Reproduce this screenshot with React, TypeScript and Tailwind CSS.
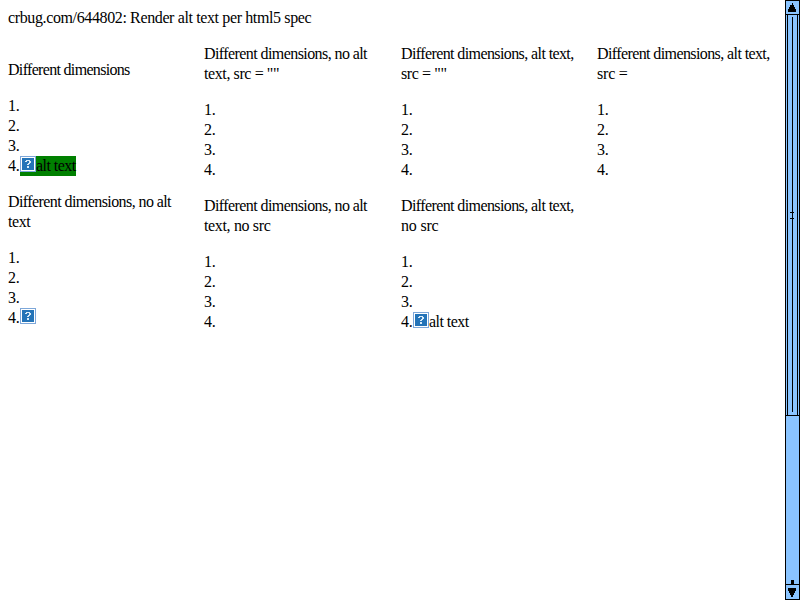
type Line = { text: string; tracking: string };
type Group = { lines: Line[]; offset?: string; icon?: boolean; alt?: boolean; highlight?: boolean };

const noAlt: Line = { text: 'Different dimensions, no alt', tracking: 'tracking-[-0.58px]' };
const withAlt: Line = { text: 'Different dimensions, alt text,', tracking: 'tracking-[-0.6px]' };
const short = 'tracking-[-0.4px]';

const groups: Group[] = [
  { lines: [{ text: 'Different dimensions', tracking: 'tracking-[-0.68px]' }], offset: 'pt-4', icon: true, alt: true, highlight: true },
  { lines: [noAlt, { text: 'text, src = ""', tracking: short }] },
  { lines: [withAlt, { text: 'src = ""', tracking: short }] },
  { lines: [withAlt, { text: 'src =', tracking: 'tracking-[-0.2px]' }] },
  { lines: [noAlt, { text: 'text', tracking: short }], offset: '-mt-1', icon: true },
  { lines: [noAlt, { text: 'text, no src', tracking: 'tracking-[-0.35px]' }] },
  { lines: [withAlt, { text: 'no src', tracking: 'tracking-[-0.2px]' }], icon: true, alt: true },
];

function BrokenImage() {
  return (
    <svg width="16" height="16" viewBox="0 0 16 16" className="-mt-1 shrink-0" shapeRendering="crispEdges">
      <rect width="16" height="16" fill="#7da7d9" />
      <rect x="1" y="1" width="14" height="14" fill="#fff" />
      <rect x="2" y="2" width="12" height="12" fill="#2474b8" />
      <path d="M6 4h4v1H6zM5 5h2v1H5zM9 5h2v2H9zM8 7h2v1H8zM7 8h2v1H7zM7 10h2v2H7z" fill="#d8eaf7" />
    </svg>
  );
}

function Scrollbar() {
  return (
    <aside className="flex h-[600px] w-[15px] flex-col border-x border-black bg-[#8ac4ff]">
      <div className="h-[15px] border-y border-black">
        <svg width="13" height="13" viewBox="0 0 13 13" shapeRendering="crispEdges">
          <path d="M6 2h1v2h1v2h1v2h1v3H2V8h1V6h1V4h2z" />
        </svg>
      </div>
      <div className="h-[401px] border-b border-black">
        <svg width="13" height="400" viewBox="0 0 13 400" shapeRendering="crispEdges">
          <path d="M1 0h1v400H1zM11 0h1v400h-1zM6 2h1v395H6zM4 197h4v1H4zM4 203h4v1H4z" />
        </svg>
      </div>
      <div className="flex grow items-end justify-center">
        <span className="h-1 w-[3px] bg-black" />
      </div>
      <div className="h-[16px] border-y border-black">
        <svg width="13" height="14" viewBox="0 0 13 14" shapeRendering="crispEdges">
          <path d="M2 3h8v3H9v2H8v2H7v2H5v-2H4V8H3V6H2z" />
        </svg>
      </div>
    </aside>
  );
}

export default function App() {
  return (
    <div className="flex h-[600px] w-[800px] overflow-hidden bg-white font-['Liberation_Serif',serif] text-base leading-5 text-black">
      <main className="w-[785px] shrink-0 pl-2 pt-2">
        <p className="whitespace-nowrap tracking-[-0.375px]">crbug.com/644802: Render alt text per html5 spec</p>
        <div className="grid w-[776px] grid-cols-[196px_197px_196px_187px] gap-y-4 pt-4">
          {groups.map((g, i) => (
            <section key={i} className={g.offset}>
              {g.lines.map((l) => <p key={l.text} className={`whitespace-nowrap ${l.tracking}`}>{l.text}</p>)}
              <div className="pt-4 tracking-[-0.3px]">
                <div>1.</div><div>2.</div><div>3.</div>
                <div className="flex h-5">
                  <span className="w-3">4.</span>
                  <span className={g.highlight ? 'flex w-14 items-center bg-[#008000]' : 'flex items-center'}>
                    {g.icon && <BrokenImage />}
                    {g.alt && <span className="whitespace-nowrap tracking-[-0.55px]">alt text</span>}
                  </span>
                </div>
              </div>
            </section>
          ))}
        </div>
      </main>
      <Scrollbar />
    </div>
  );
}
